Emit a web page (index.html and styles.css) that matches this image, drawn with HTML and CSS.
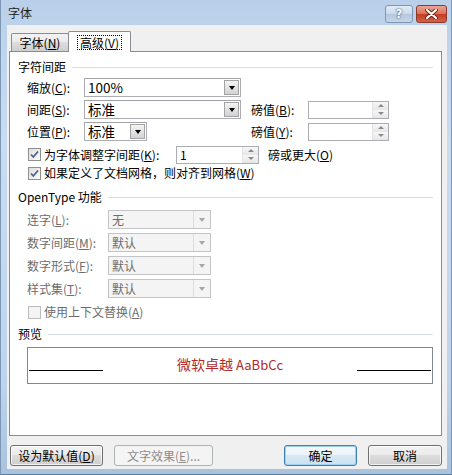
FILE: index.html
```html
<!DOCTYPE html>
<html lang="zh-CN">
<head>
    <meta charset="UTF-8">
    <title>字体</title>
    <link rel="stylesheet" href="styles.css">
</head>
<body>
    <div class="window">
        <div class="titlebar">
            <span class="title">字体</span>
            <div class="caption-btns">
                <span class="cap help">?</span>
                <span class="cap close">
                    <svg width="13" height="10" viewBox="0 0 13 10">
                        <path d="M2 1 L11 9 M11 1 L2 9" stroke="#6b2216" stroke-width="4" stroke-linecap="round"/>
                        <path d="M2 1 L11 9 M11 1 L2 9" stroke="#fff" stroke-width="2.2" stroke-linecap="round"/>
                    </svg>
                </span>
            </div>
        </div>

        <div class="client">
            <div class="tabs">
                <span class="tab first">字体(<u>N</u>)</span>
                <span class="tab active"><span class="focus">高级(<u>V</u>)</span></span>
            </div>

            <div class="panel">
                <div class="group-title">字符间距</div>
                <div class="spacing-grid">
                    <span class="lbl">缩放(<u>C</u>):</span>
                    <div class="combo"><span class="val">100%</span><span class="drop"><i></i></span></div>
                    <span></span><span></span><span></span>

                    <span class="lbl">间距(<u>S</u>):</span>
                    <div class="combo"><span class="val">标准</span><span class="drop"><i></i></span></div>
                    <span></span>
                    <span class="lbl">磅值(<u>B</u>):</span>
                    <div class="spin"><span class="val"></span><span class="arrows"><b class="up"></b><b class="down"></b></span></div>

                    <span class="lbl">位置(<u>P</u>):</span>
                    <div class="combo short"><span class="val">标准</span><span class="drop"><i></i></span></div>
                    <span></span>
                    <span class="lbl">磅值(<u>Y</u>):</span>
                    <div class="spin"><span class="val"></span><span class="arrows"><b class="up"></b><b class="down"></b></span></div>
                </div>

                <div class="check-row kern">
                    <span class="box checked">
                        <svg width="13" height="13" viewBox="0 0 13 13"><path d="M3 6.5 L5.3 9 L10 3.5" stroke="#4d628f" stroke-width="1.8" fill="none"/></svg>
                    </span>
                    <span class="kern-text">为字体调整字间距(<u>K</u>):</span>
                    <div class="spin kern-spin"><span class="val">1</span><span class="arrows"><b class="up"></b><b class="down"></b></span></div>
                    <span class="kern-after">磅或更大(<u>O</u>)</span>
                </div>
                <div class="check-row grid-row">
                    <span class="box checked">
                        <svg width="13" height="13" viewBox="0 0 13 13"><path d="M3 6.5 L5.3 9 L10 3.5" stroke="#4d628f" stroke-width="1.8" fill="none"/></svg>
                    </span>
                    <span>如果定义了文档网格，则对齐到网格(<u>W</u>)</span>
                </div>

                <div class="group-title ot-title">OpenType 功能</div>
                <div class="ot-grid">
                    <span class="lbl off">连字(<u>L</u>):</span>
                    <div class="combo disabled"><span class="val">无</span><span class="drop"><i></i></span></div>
                    <span class="lbl off">数字间距(<u>M</u>):</span>
                    <div class="combo disabled"><span class="val">默认</span><span class="drop"><i></i></span></div>
                    <span class="lbl off">数字形式(<u>F</u>):</span>
                    <div class="combo disabled"><span class="val">默认</span><span class="drop"><i></i></span></div>
                    <span class="lbl off">样式集(<u>T</u>):</span>
                    <div class="combo disabled"><span class="val">默认</span><span class="drop"><i></i></span></div>
                </div>
                <div class="check-row ctx-row">
                    <span class="box disabled"></span>
                    <span class="off">使用上下文替换(<u>A</u>)</span>
                </div>

                <div class="group-title preview-title">预览</div>
                <div class="preview">
                    <span class="rule"></span>
                    <span class="sample">微软卓越 <span class="latin">AaBbCc</span></span>
                    <span class="rule"></span>
                </div>
            </div>

            <div class="buttons">
                <span class="btn b-default">设为默认值(<u>D</u>)</span>
                <span class="btn b-effects disabled">文字效果(<u>E</u>)...</span>
                <span class="btn b-ok focused">确定</span>
                <span class="btn b-cancel">取消</span>
            </div>
        </div>
    </div>
</body>
</html>
```

FILE: styles.css
```css
body {
    margin: 0;
    font-family: "Noto Sans CJK SC", "Noto Sans", sans-serif;
    font-size: 12px;
    color: #000;
    background: #fff;
}

u {
    text-decoration: underline;
}

.window {
    width: 452px;
    height: 475px;
    box-sizing: border-box;
    display: flex;
    flex-direction: column;
    padding: 0 4px 5px 6px;
    background: linear-gradient(#bad0ea, #c9dbef 30%, #bfd4ec 80%, #a9c2de);
    border-left: 1px solid #7d98b6;
    border-right: 1px solid #7d98b6;
    border-bottom: 1px solid #5b7c9c;
}

/* title bar */
.titlebar {
    height: 25px;
    display: flex;
    justify-content: space-between;
    align-items: flex-start;
    padding-left: 1px;
}

.title {
    margin-top: 6px;
    line-height: 14px;
    color: #1e1e1e;
}

.caption-btns {
    display: flex;
    margin-top: 5px;
}

.cap {
    height: 18px;
    box-sizing: border-box;
    border-radius: 3px;
    display: flex;
    align-items: center;
    justify-content: center;
}

.help {
    width: 28px;
    margin-right: 3px;
    border: 1px solid #7f96b2;
    background: linear-gradient(#e3ecf6, #cad9ea 50%, #b3c7de 50%, #c5d6ea);
    color: #fff;
    font-family: "DejaVu Sans", sans-serif;
    font-weight: bold;
    font-size: 12px;
    text-shadow: 0 0 2px #3d5674, 0 0 1px #3d5674;
}

.close {
    width: 31px;
    border: 1px solid #8a3a2c;
    background: linear-gradient(#eba595, #dc6f56 50%, #c63a20 50%, #d5604a);
}

/* client area */
.client {
    flex: 1;
    display: flex;
    flex-direction: column;
    padding: 6px 5px 0 2px;
    background: #f0f0f0;
}

.tabs {
    display: flex;
    align-items: flex-end;
    height: 20px;
    margin-left: 2px;
}

.tab {
    height: 18px;
    box-sizing: border-box;
    display: flex;
    align-items: center;
    justify-content: center;
    border: 1px solid #898c95;
    border-bottom: none;
    border-radius: 2px 2px 0 0;
    background: linear-gradient(#f2f2f2, #ebebeb 50%, #dddddd 50%, #cfcfcf);
    line-height: 14px;
}

.tab.first {
    width: 58px;
}

.tab.active {
    width: 63px;
    height: 21px;
    margin-left: -1px;
    margin-bottom: -1px;
    background: #fff;
    position: relative;
    z-index: 1;
}

.focus {
    outline: 1px dotted #000;
    padding: 0 2px;
    line-height: 13px;
}

.panel {
    height: 385px;
    box-sizing: border-box;
    border: 1px solid #898c95;
    background: #fff;
    padding: 8px 8px 0 8px;
}

.group-title {
    display: flex;
    align-items: center;
    height: 14px;
    line-height: 14px;
}

.group-title::after {
    content: "";
    flex: 1;
    height: 1px;
    margin-left: 6px;
    background: #d5dfe5;
}

.lbl {
    line-height: 14px;
    white-space: nowrap;
}

.off {
    color: #6d6d6d;
}

.spacing-grid {
    display: grid;
    grid-template-columns: 57px 157px 10px 57px 81px;
    grid-auto-rows: 19px;
    row-gap: 3px;
    align-items: center;
    margin: 4px 0 0 9px;
}

/* drop-down list */
.combo {
    height: 19px;
    box-sizing: border-box;
    display: flex;
    align-items: center;
    padding-left: 3px;
    border: 1px solid #abadb3;
    border-top-color: #a0a2a8;
    background: #fff;
    line-height: 15px;
    font-size: 13.5px;
}

.combo.short {
    width: 63px;
}

.combo .val {
    flex: 1;
}

.combo .drop {
    width: 15px;
    height: 15px;
    box-sizing: border-box;
    margin-right: 1px;
    display: flex;
    align-items: center;
    justify-content: center;
    border: 1px solid #a4a4a4;
    background: linear-gradient(#f4f4f4, #e3e3e3 50%, #d2d2d2);
}

.combo .drop i {
    width: 0;
    height: 0;
    border-style: solid;
    border-width: 4px 3.5px 0;
    border-color: #000 transparent transparent;
}

.combo.disabled {
    background: #f4f4f4;
    border-color: #c2c5c8;
    color: #6d6d6d;
    font-size: 12px;
    line-height: 14px;
}

.combo.disabled .drop {
    height: 17px;
    width: 17px;
    margin-right: 0;
    border: none;
    border-left: 1px solid #dcdcdc;
    background: #f4f4f4;
}

.combo.disabled .drop i {
    border-top-color: #a6a6a6;
}

/* spin box */
.spin {
    height: 18px;
    box-sizing: border-box;
    display: flex;
    border: 1px solid #abadb3;
    background: #fff;
    line-height: 14px;
}

.spin .val {
    flex: 1;
    padding: 1px 0 0 3px;
}

.spin .arrows {
    width: 15px;
    display: flex;
    flex-direction: column;
    border-left: 1px solid #e4e4e4;
}

.spin .arrows b {
    flex: 1;
    display: flex;
    align-items: center;
    justify-content: center;
    background: linear-gradient(#f7f7f7, #e6e6e6);
}

.spin .arrows b::after {
    content: "";
    border-style: solid;
    border-color: transparent;
}

.spin .arrows .up::after {
    border-width: 0 3px 3px;
    border-bottom-color: #8a8a8a;
}

.spin .arrows .down::after {
    border-width: 3px 3px 0;
    border-top-color: #8a8a8a;
}

/* check boxes */
.check-row {
    display: flex;
    align-items: center;
    margin-left: 10px;
    line-height: 14px;
}

.box {
    width: 13px;
    height: 13px;
    box-sizing: border-box;
    margin-right: 3px;
    border: 1px solid #8e8f8f;
    background: linear-gradient(135deg, #dedede, #fbfbfb);
    display: flex;
}

.box svg {
    margin: -1px;
}

.box.disabled {
    border-color: #bcbcbc;
    background: #f4f4f4;
}

.kern {
    height: 19px;
    margin-top: 4px;
}

.kern-text {
    width: 132px;
}

.kern-spin {
    width: 83px;
}

.kern-after {
    margin-left: 9px;
}

.grid-row {
    height: 14px;
    margin-top: 2px;
}

.ot-title {
    margin-top: 10px;
}

.ot-grid {
    display: grid;
    grid-template-columns: 81px 103px;
    grid-auto-rows: 19px;
    row-gap: 4px;
    align-items: center;
    margin: 6px 0 0 9px;
}

.ctx-row {
    height: 14px;
    margin-top: 7px;
}

.preview-title {
    margin-top: 8px;
}

.preview {
    width: 406px;
    height: 37px;
    box-sizing: border-box;
    margin: 6px 0 0 9px;
    padding: 0 1px;
    display: flex;
    align-items: flex-start;
    border: 1px solid #828790;
}

.preview .rule {
    width: 74px;
    height: 22px;
    border-bottom: 1px solid #000;
}

.preview .sample {
    flex: 1;
    text-align: center;
    padding-top: 6px;
    line-height: 20px;
    font-size: 14px;
    color: #b22a2a;
}

.preview .latin {
    font-size: 13px;
}

/* bottom buttons */
.buttons {
    display: flex;
    margin-top: 9px;
    padding-left: 1px;
}

.btn {
    height: 21px;
    box-sizing: border-box;
    display: flex;
    align-items: center;
    justify-content: center;
    border: 1px solid #707070;
    border-radius: 3px;
    background: linear-gradient(#f2f2f2, #ebebeb 50%, #dddddd 50%, #cfcfcf);
    box-shadow: inset 0 0 0 1px rgba(255, 255, 255, 0.7);
    line-height: 14px;
}

.b-default {
    width: 93px;
}

.b-effects {
    width: 99px;
    margin-left: 11px;
}

.b-ok {
    width: 73px;
    margin-left: auto;
}

.b-cancel {
    width: 74px;
    margin-left: 11px;
}

.btn.disabled {
    border-color: #adb2b5;
    background: #f4f4f4;
    box-shadow: none;
    color: #8d8d8d;
}

.btn.focused {
    border-color: #3c7fb1;
    background: linear-gradient(#f4f9fc, #e9f3f9 50%, #d8e9f4 50%, #cbe1f0);
    box-shadow: inset 0 0 0 1px #9fd2f2;
}
```
